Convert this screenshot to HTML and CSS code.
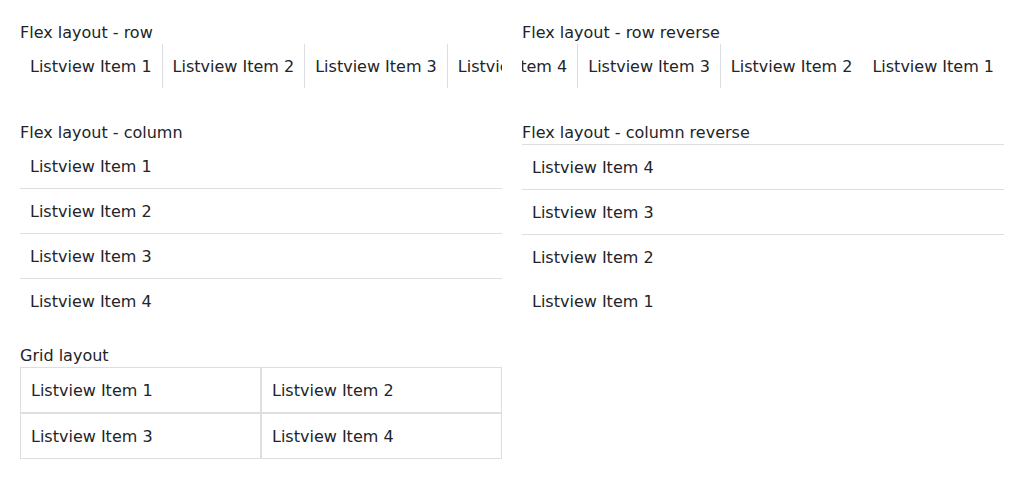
FILE: index.html
```html
<!DOCTYPE html>
<html>
<head>
<meta charset="utf-8">
<link rel="stylesheet" href="styles.css">
</head>
<body>
<div class="page">
  <section class="sec sec-row">
    <div class="title">Flex layout - row</div>
    <div class="list row">
      <div class="item">Listview Item 1</div>
      <div class="item">Listview Item 2</div>
      <div class="item">Listview Item 3</div>
      <div class="item">Listview Item 4</div>
    </div>
  </section>
  <section class="sec sec-row">
    <div class="title">Flex layout - row reverse</div>
    <div class="list row-rev">
      <div class="item">Listview Item 1</div>
      <div class="item">Listview Item 2</div>
      <div class="item">Listview Item 3</div>
      <div class="item">Listview Item 4</div>
    </div>
  </section>
  <section class="sec sec-col">
    <div class="title">Flex layout - column</div>
    <div class="list col">
      <div class="item">Listview Item 1</div>
      <div class="item">Listview Item 2</div>
      <div class="item">Listview Item 3</div>
      <div class="item">Listview Item 4</div>
    </div>
  </section>
  <section class="sec sec-col">
    <div class="title">Flex layout - column reverse</div>
    <div class="list col-rev">
      <div class="item">Listview Item 1</div>
      <div class="item">Listview Item 2</div>
      <div class="item">Listview Item 3</div>
      <div class="item">Listview Item 4</div>
    </div>
  </section>
  <section class="sec sec-grid">
    <div class="title">Grid layout</div>
    <div class="list grid">
      <div class="item">Listview Item 1</div>
      <div class="item">Listview Item 2</div>
      <div class="item">Listview Item 3</div>
      <div class="item">Listview Item 4</div>
    </div>
  </section>
</div>
</body>
</html>
```

FILE: styles.css
```css
* { box-sizing: border-box; }
html, body {
  margin: 0;
  padding: 0;
  background: #ffffff;
}
body {
  font-family: "DejaVu Sans", sans-serif;
  font-size: 16px;
  color: #222428;
}
.page {
  padding: 20px;
  display: grid;
  grid-template-columns: 482px 482px;
  column-gap: 20px;
  align-items: start;
}
.title {
  padding-top: 1px;
  line-height: 23px;
  height: 24px;
  white-space: nowrap;
}
.sec-row { margin-bottom: 32px; }
.sec-col { margin-bottom: 20px; }
.list { min-width: 0; }
.item {
  padding: 11px 10px 9px;
  line-height: 24px;
  white-space: nowrap;
}
.row, .row-rev {
  display: flex;
  overflow: hidden;
  width: 482px;
}
.row { flex-direction: row; }
.row-rev { flex-direction: row-reverse; }
.row .item, .row-rev .item { flex-shrink: 0; }
.row .item:not(:first-child), .row-rev .item:not(:first-child) {
  border-left: 1px solid #dcdee2;
}
.col { display: flex; flex-direction: column; }
.col-rev { display: flex; flex-direction: column-reverse; }
.col .item:not(:first-child), .col-rev .item:not(:first-child) {
  border-top: 1px solid #dcdee2;
}
.grid {
  display: grid;
  grid-template-columns: 1fr 1fr;
}
.grid .item {
  border: 1px solid #dcdee2;
}
```
